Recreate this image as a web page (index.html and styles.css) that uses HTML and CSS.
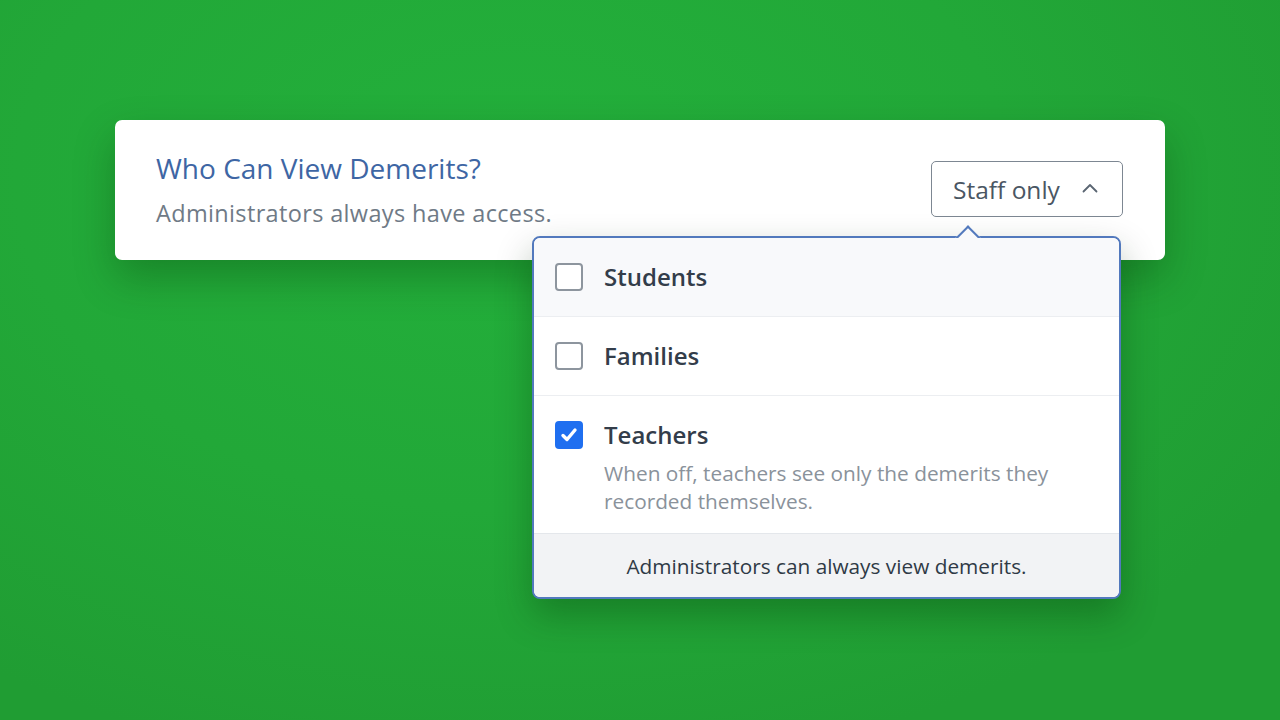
FILE: index.html
```html
<!DOCTYPE html>
<html lang="en">
<head>
    <meta charset="UTF-8">
    <meta name="viewport" content="width=device-width, initial-scale=1.0">
    <title>Demerit Visibility</title>
    <link rel="stylesheet" href="styles.css">
</head>
<body>
<div class="page">
    <div class="setting-card">
        <div class="setting-text">
            <h2>Who Can View Demerits?</h2>
            <p>Administrators always have access.</p>
        </div>

        <div class="picker">
            <button type="button" class="picker-btn">
                <span>Staff only</span>
                <svg class="chevron" width="16" height="10" viewBox="0 0 16 10">
                    <path d="M1.5 8.5 L8 2 L14.5 8.5" fill="none" stroke="#5a6572" stroke-width="1.8" stroke-linecap="round" stroke-linejoin="round"/>
                </svg>
            </button>

            <div class="menu">
                <span class="menu-notch"></span>
                <label class="menu-item hovered">
                    <span class="box"></span>
                    <span class="item-body"><span class="item-label">Students</span></span>
                </label>
                <label class="menu-item">
                    <span class="box"></span>
                    <span class="item-body"><span class="item-label">Families</span></span>
                </label>
                <label class="menu-item tall">
                    <span class="box checked">
                        <svg width="20" height="20" viewBox="0 0 20 20">
                            <path d="M4 10.5 L8 14.5 L16 5" fill="none" stroke="#fff" stroke-width="3.4" stroke-linecap="round" stroke-linejoin="round"/>
                        </svg>
                    </span>
                    <span class="item-body">
                        <span class="item-label">Teachers</span>
                        <span class="item-desc">When off, teachers see only the demerits they recorded themselves.</span>
                    </span>
                </label>
                <div class="menu-footer">Administrators can always view demerits.</div>
            </div>
        </div>
    </div>
</div>
</body>
</html>
```

FILE: styles.css
```css
body {
    margin: 0;
    font-family: 'Open Sans', 'Noto Sans', sans-serif;
    background: radial-gradient(ellipse 900px 600px at 40% 25%, #23b03b 0%, #22a838 55%, #209d33 100%);
    min-height: 720px;
    overflow: hidden;
}

.page {
    padding: 120px 115px 0;
}

.setting-card {
    background: #fff;
    border-radius: 7px;
    height: 140px;
    box-sizing: border-box;
    padding: 0 42px 0 41px;
    display: flex;
    align-items: flex-start;
    justify-content: space-between;
    box-shadow: 0 18px 40px rgba(0, 40, 0, 0.28);
}

.setting-text h2 {
    margin: 30px 0 0;
    font-size: 28px;
    font-weight: 400;
    color: #3e66a4;
    line-height: 36px;
}

.setting-text p {
    margin: 12px 0 0;
    font-size: 23.5px;
    color: #6f7a86;
    line-height: 30px;
    letter-spacing: 0.35px;
}

.picker {
    position: relative;
    margin-top: 41px;
}

.picker-btn {
    width: 192px;
    height: 56px;
    box-sizing: border-box;
    background: #fff;
    border: 1px solid #7d8792;
    border-radius: 5px;
    padding: 0 24px 0 21px;
    display: flex;
    align-items: center;
    justify-content: space-between;
    font-family: inherit;
    font-size: 24.5px;
    color: #4a5663;
    cursor: pointer;
}

.chevron {
    margin-top: -2px;
}

.menu {
    position: absolute;
    top: 75px;
    right: 2px;
    width: 589px;
    box-sizing: border-box;
    background: #fff;
    border: 2px solid #5279bd;
    border-radius: 8px;
    box-shadow: 0 16px 36px rgba(0, 40, 0, 0.3);
}

.menu-notch {
    position: absolute;
    top: -9px;
    left: 425px;
    width: 16px;
    height: 16px;
    background: #f8f9fb;
    border-top: 2px solid #5279bd;
    border-left: 2px solid #5279bd;
    transform: rotate(45deg);
}

.menu-item {
    position: relative;
    display: flex;
    align-items: center;
    gap: 21px;
    height: 78px;
    padding: 0 21px;
    border-bottom: 1px solid #eceef1;
    cursor: pointer;
}

.menu-item.hovered {
    background: #f8f9fb;
    border-radius: 6px 6px 0 0;
}

.menu-item.tall {
    height: auto;
    align-items: flex-start;
    padding-top: 22px;
    padding-bottom: 18px;
    border-bottom: 1px solid #e4e7eb;
}

.box {
    flex: none;
    width: 28px;
    height: 28px;
    box-sizing: border-box;
    border: 2px solid #8d959e;
    border-radius: 4px;
    background: #fff;
    display: flex;
    align-items: center;
    justify-content: center;
}

.menu-item.tall .box {
    margin-top: 3px;
}

.box.checked {
    background: #1f6ff0;
    border-color: #1f6ff0;
}

.item-body {
    display: flex;
    flex-direction: column;
}

.item-label {
    font-size: 24px;
    font-weight: 600;
    color: #333d4a;
    line-height: 34px;
}

.item-desc {
    margin-top: 7px;
    font-size: 20.8px;
    color: #8a929b;
    line-height: 28px;
    max-width: 470px;
}

.menu-footer {
    height: 63px;
    display: flex;
    align-items: center;
    justify-content: center;
    background: #f2f3f5;
    border-radius: 0 0 6px 6px;
    font-size: 20.8px;
    color: #2f3a46;
}
```
